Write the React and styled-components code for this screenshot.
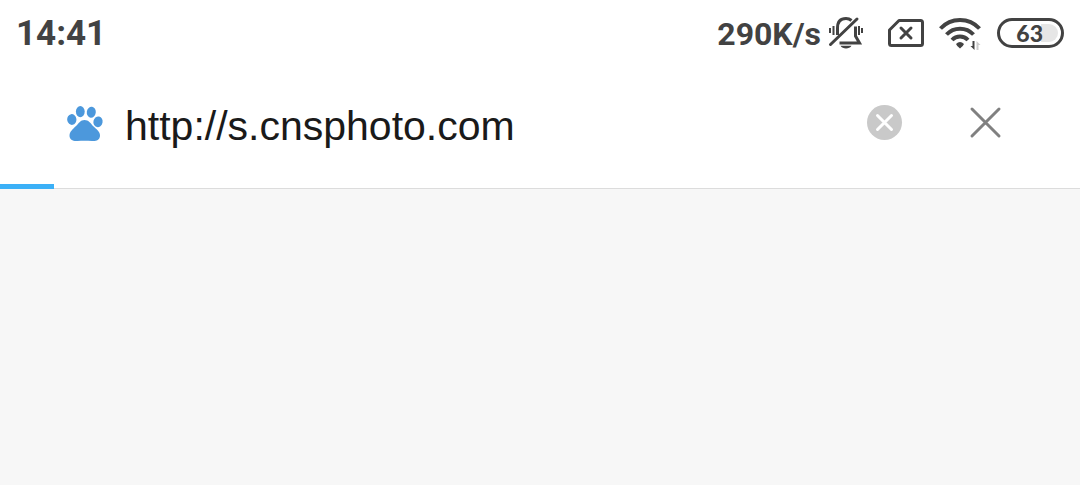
import { useState } from 'react';
import styled, { createGlobalStyle } from 'styled-components';

const GlobalStyle = createGlobalStyle`
  * {
    box-sizing: border-box;
  }

  body {
    margin: 0;
    background-color: #f7f7f7;
    font-family: Roboto, 'Liberation Sans', sans-serif;
  }
`;

const Header = styled.header`
  position: relative;
  background-color: #ffffff;
  border-bottom: 1px solid #dcdcdc;
`;

const StatusBar = styled.div`
  display: flex;
  align-items: center;
  justify-content: space-between;
  height: 66px;
  padding: 0 16px;
  color: #424242;
  font-weight: 700;
`;

const Clock = styled.time`
  padding-top: 2px;
  font-size: 35px;
  line-height: 40px;
`;

const StatusGroup = styled.div`
  display: flex;
  align-items: center;
`;

const Speed = styled.span`
  margin-right: 7px;
  padding-top: 2px;
  font-size: 32px;
  line-height: 40px;
`;

const StatusIcon = styled.svg`
  display: block;
  flex: none;
  margin-right: ${(props) => props.$gap}px;
  fill: none;
  stroke: #424242;
  stroke-width: 3;
`;

const Battery = styled.div`
  display: flex;
  align-items: center;
  justify-content: flex-end;
  width: 67px;
  height: 30px;
  padding-right: 3px;
  border: 3px solid #424242;
  border-radius: 15px;
`;

const BatteryFill = styled.div`
  display: flex;
  align-items: center;
  justify-content: flex-end;
  width: 42px;
  height: 18px;
  padding-right: 15px;
  border-radius: 0 9px 9px 0;
  background: linear-gradient(to right, #ffffff 60%, #e6e6e6 60%);
  font-family: Lato, sans-serif;
  font-size: 23px;
  font-weight: 900;
  line-height: 24px;
`;

const AddressBar = styled.form`
  display: flex;
  align-items: center;
  height: 122px;
  padding: 0 71px 8px 67px;
`;

const PawIcon = styled.svg`
  display: block;
  flex: none;
  margin-right: 20px;
  fill: #4c98dc;
`;

const UrlInput = styled.input`
  flex: 1;
  min-width: 0;
  padding: 6px 0 0;
  border: none;
  outline: none;
  background: transparent;
  color: #1a1a1a;
  font-family: 'Liberation Sans', Arial, sans-serif;
  font-size: 41px;
  line-height: 48px;
`;

const IconButton = styled.button`
  display: flex;
  flex: none;
  margin-left: ${(props) => props.$gap}px;
  padding: 0;
  border: none;
  background: none;
  cursor: pointer;
`;

const Progress = styled.div`
  position: absolute;
  left: 0;
  bottom: -1px;
  width: 5%;
  height: 5px;
  background-color: #3bb0f7;
`;

const App = () => {
  const [url, setUrl] = useState('http://s.cnsphoto.com');

  return (
    <>
      <GlobalStyle />
      <Header>
        <StatusBar>
          <Clock>14:41</Clock>
          <StatusGroup>
            <Speed>290K/s</Speed>
            <StatusIcon $gap={24} width="36" height="36" viewBox="0 0 36 36" aria-hidden="true">
              <path d="M9.5 20V13C9.5 7 12.5 3.5 18 3.5C20.5 3.5 22 4.2 23.5 5.5" />
              <path d="M27.5 11.5V21L31.5 28H11.5" />
              <path d="M2.5 29.5L29 4" strokeLinecap="round" />
              <path d="M2 13V18M5.5 11V20M31 11V20M34 13V18" strokeWidth="2" />
              <path d="M12.5 30.8H23.5C21.5 34.4 14.5 34.4 12.5 30.8Z" fill="#424242" stroke="none" />
            </StatusIcon>
            <StatusIcon $gap={15} width="36" height="30" viewBox="0 0 36 30" aria-hidden="true">
              <path d="M11 2.5H32.5Q34.5 2.5 34.5 4.5V25.5Q34.5 27.5 32.5 27.5H3.5Q1.5 27.5 1.5 25.5V12Z" strokeLinejoin="round" />
              <path d="M13 10L23 20M23 10L13 20" strokeLinecap="round" />
            </StatusIcon>
            <StatusIcon $gap={16} width="42" height="36" viewBox="0 0 42 36" aria-hidden="true">
              <path d="M1.5 13.5A26.5 26.5 0 0 1 40.5 13.5" strokeWidth="4" />
              <path d="M7.5 19.5A18.5 18.5 0 0 1 34.5 19.5" strokeWidth="4" />
              <path d="M13 25A11 11 0 0 1 29 25" strokeWidth="4" />
              <path d="M17 29Q21 25 25 29Q24 31.5 21 33.5Q18 31.5 17 29Z" fill="#424242" stroke="none" />
              <path d="M35.5 26V35L31.5 31H33.5V26Z" fill="#424242" stroke="none" />
              <path d="M37.5 35V26L41.5 30H39.5V35Z" fill="#cccccc" stroke="none" />
            </StatusIcon>
            <Battery>
              <BatteryFill>63</BatteryFill>
            </Battery>
          </StatusGroup>
        </StatusBar>
        <AddressBar onSubmit={(e) => e.preventDefault()}>
          <PawIcon width="38" height="38" viewBox="0 -1 38 38" aria-hidden="true">
            <ellipse cx="4.8" cy="14.5" rx="4.6" ry="5.4" transform="rotate(-8 4.8 14.5)" />
            <ellipse cx="13.3" cy="6.6" rx="4.4" ry="5.6" />
            <ellipse cx="24.3" cy="7.2" rx="4.5" ry="5.5" transform="rotate(8 24.3 7.2)" />
            <ellipse cx="31" cy="16.8" rx="4.6" ry="5.4" transform="rotate(12 31 16.8)" />
            <path d="M17.5 15C21.5 15 23.5 18 26 21C29 24 33.5 26.5 33 31C32.5 35.5 28.5 36.5 25 36C20 35.5 15 35.5 10.5 36C6.5 36.5 2.5 35 2.5 30.5C2.5 26.5 6 24 9 21C12 18 13.5 15 17.5 15Z" />
          </PawIcon>
          <UrlInput
            type="text"
            aria-label="Address"
            spellCheck={false}
            value={url}
            onChange={(e) => setUrl(e.target.value)}
          />
          <IconButton type="button" $gap={20} aria-label="Clear address" onClick={() => setUrl('')}>
            <svg width="36" height="36" viewBox="0 0 36 36">
              <circle cx="17.5" cy="17.5" r="17.5" fill="#c9c9c9" />
              <path d="M10.5 10.5L24.5 24.5M24.5 10.5L10.5 24.5" stroke="#ffffff" strokeWidth="3" strokeLinecap="round" />
            </svg>
          </IconButton>
          <IconButton type="button" $gap={60} aria-label="Stop loading">
            <svg width="46" height="36" viewBox="0 0 46 36">
              <path d="M9 4L36 31M36 4L9 31" stroke="#808080" strokeWidth="3" strokeLinecap="round" />
            </svg>
          </IconButton>
        </AddressBar>
        <Progress role="progressbar" aria-label="Page loading" aria-valuenow={5} />
      </Header>
    </>
  );
};

export default App;
